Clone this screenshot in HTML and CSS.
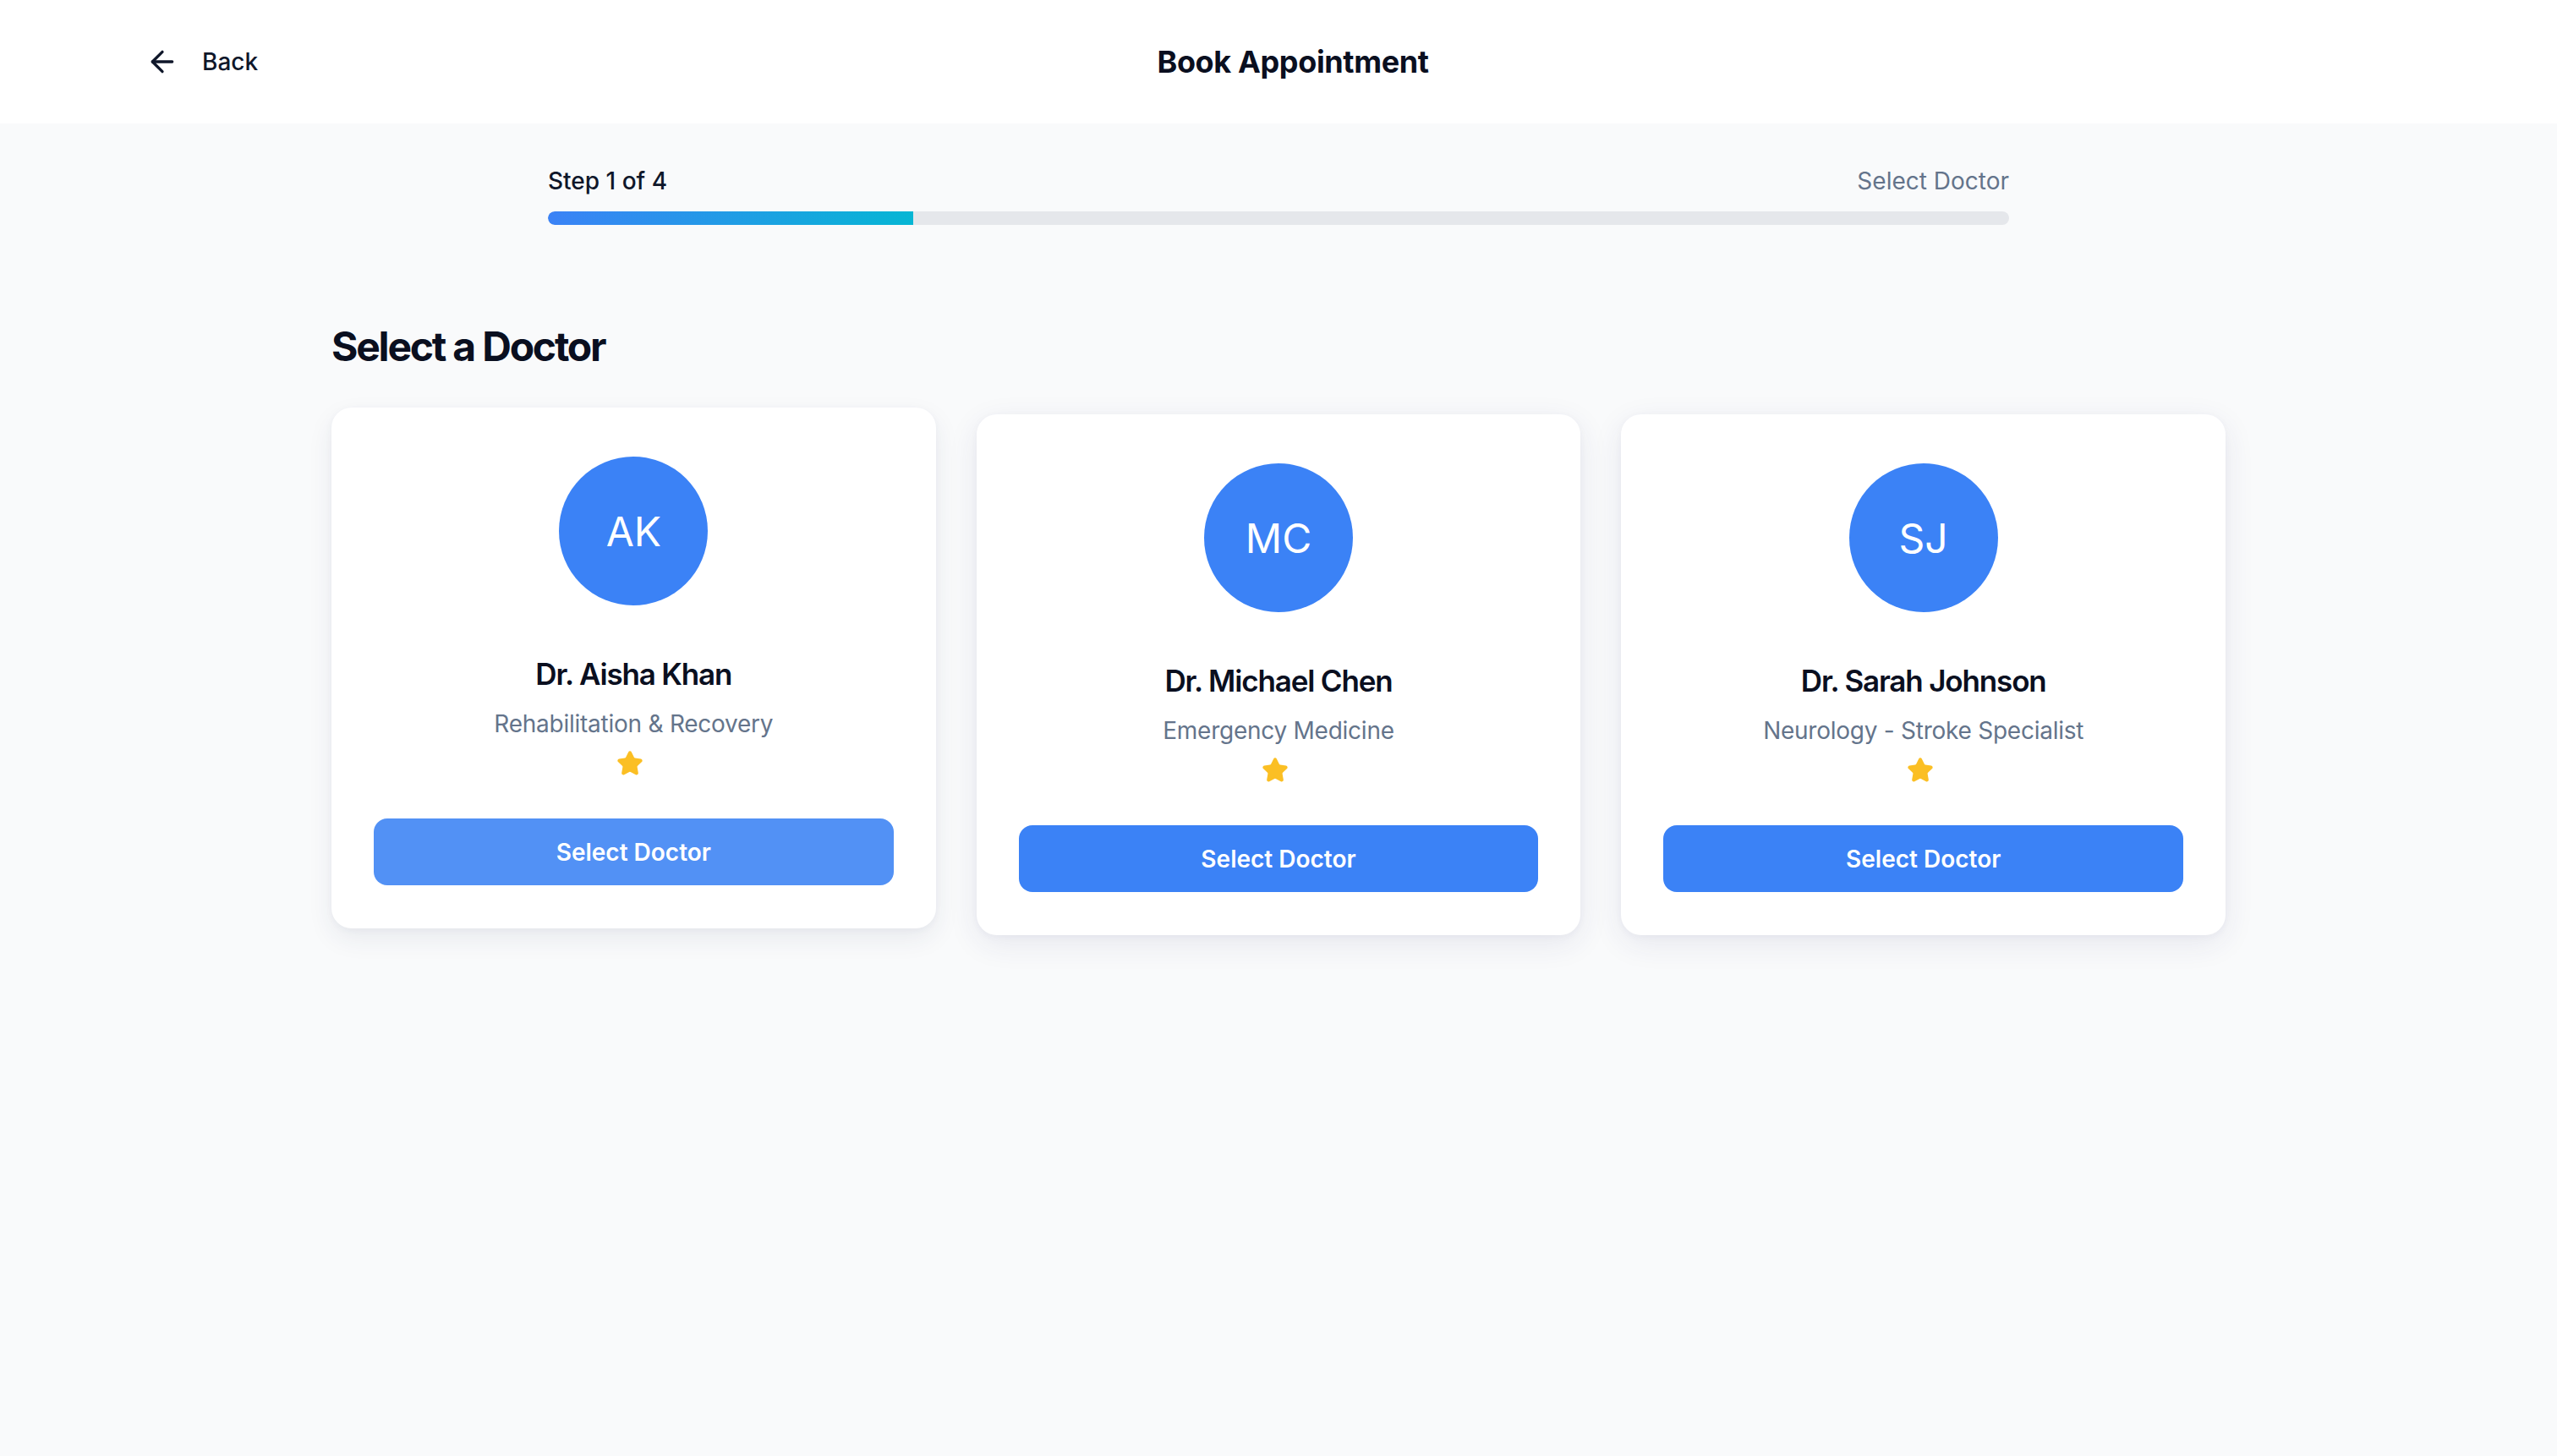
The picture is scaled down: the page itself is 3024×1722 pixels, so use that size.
FILE: index.html
```html
<!DOCTYPE html>
<html lang="en">
<head>
<meta charset="utf-8">
<title>Book Appointment</title>
<link rel="stylesheet" href="styles.css">
</head>
<body>
<header class="topbar">
  <a class="back" href="#">
    <svg class="back-icon" viewBox="0 0 24 24" fill="none" stroke="currentColor" stroke-width="2" stroke-linecap="round" stroke-linejoin="round"><path d="m12 19-7-7 7-7"/><path d="M19 12H5"/></svg>
    <span>Back</span>
  </a>
  <h1 class="title">Book Appointment</h1>
  <div class="spacer"></div>
</header>

<main>
  <section class="progress">
    <div class="progress-labels">
      <span class="step">Step 1 of 4</span>
      <span class="step-name">Select Doctor</span>
    </div>
    <div class="bar"><div class="bar-fill" style="width:25%"></div></div>
  </section>

  <section class="doctors">
    <h2 class="heading">Select a Doctor</h2>
    <div class="grid">
      <div class="card card-hover">
        <div class="avatar">AK</div>
        <div class="name">Dr. Aisha Khan</div>
        <div class="spec">Rehabilitation &amp; Recovery</div>
        <div class="rating"><svg class="star" viewBox="0 0 24 24"><path d="M11.525 2.295a.53.53 0 0 1 .95 0l2.31 4.679a2.123 2.123 0 0 0 1.595 1.16l5.166.756a.53.53 0 0 1 .294.904l-3.736 3.638a2.123 2.123 0 0 0-.611 1.878l.882 5.14a.53.53 0 0 1-.771.56l-4.618-2.428a2.122 2.122 0 0 0-1.973 0L6.396 21.01a.53.53 0 0 1-.77-.56l.881-5.139a2.122 2.122 0 0 0-.611-1.879L2.16 9.795a.53.53 0 0 1 .294-.906l5.165-.755a2.122 2.122 0 0 0 1.597-1.16z"/></svg></div>
        <button class="select">Select Doctor</button>
      </div>
      <div class="card">
        <div class="avatar">MC</div>
        <div class="name">Dr. Michael Chen</div>
        <div class="spec">Emergency Medicine</div>
        <div class="rating"><svg class="star" viewBox="0 0 24 24"><path d="M11.525 2.295a.53.53 0 0 1 .95 0l2.31 4.679a2.123 2.123 0 0 0 1.595 1.16l5.166.756a.53.53 0 0 1 .294.904l-3.736 3.638a2.123 2.123 0 0 0-.611 1.878l.882 5.14a.53.53 0 0 1-.771.56l-4.618-2.428a2.122 2.122 0 0 0-1.973 0L6.396 21.01a.53.53 0 0 1-.77-.56l.881-5.139a2.122 2.122 0 0 0-.611-1.879L2.16 9.795a.53.53 0 0 1 .294-.906l5.165-.755a2.122 2.122 0 0 0 1.597-1.16z"/></svg></div>
        <button class="select">Select Doctor</button>
      </div>
      <div class="card">
        <div class="avatar">SJ</div>
        <div class="name">Dr. Sarah Johnson</div>
        <div class="spec">Neurology - Stroke Specialist</div>
        <div class="rating"><svg class="star" viewBox="0 0 24 24"><path d="M11.525 2.295a.53.53 0 0 1 .95 0l2.31 4.679a2.123 2.123 0 0 0 1.595 1.16l5.166.756a.53.53 0 0 1 .294.904l-3.736 3.638a2.123 2.123 0 0 0-.611 1.878l.882 5.14a.53.53 0 0 1-.771.56l-4.618-2.428a2.122 2.122 0 0 0-1.973 0L6.396 21.01a.53.53 0 0 1-.77-.56l.881-5.139a2.122 2.122 0 0 0-.611-1.879L2.16 9.795a.53.53 0 0 1 .294-.906l5.165-.755a2.122 2.122 0 0 0 1.597-1.16z"/></svg></div>
        <button class="select">Select Doctor</button>
      </div>
    </div>
  </section>
</main>
</body>
</html>
```

FILE: styles.css
```css
* { box-sizing: border-box; }

html, body {
  margin: 0;
  padding: 0;
}

body {
  background: #f9fafb;
  font-family: Inter, "Noto Sans", "Liberation Sans", sans-serif;
  color: #0f172a;
  min-height: 1722px;
}

.topbar {
  height: 146px;
  background: #ffffff;
  display: flex;
  align-items: center;
  padding: 0 175px 0 172px;
}

.back {
  display: flex;
  align-items: center;
  gap: 27px;
  color: #0f172a;
  text-decoration: none;
  font-size: 28px;
  font-weight: 500;
  line-height: 40px;
}

.back-icon {
  width: 40px;
  height: 40px;
  display: block;
}

.title {
  flex: 1;
  margin: 0;
  text-align: center;
  font-size: 36px;
  line-height: 56px;
  font-weight: 700;
  letter-spacing: -0.01em;
  color: #0a0f1f;
}

.spacer {
  width: 96px;
}

.progress {
  max-width: 1728px;
  margin: 0 auto;
  padding-top: 48px;
}

.progress-labels {
  display: flex;
  justify-content: space-between;
  align-items: center;
  font-size: 28px;
  line-height: 40px;
}

.step {
  font-weight: 500;
  color: #0f172a;
}

.step-name {
  color: #64748b;
}

.bar {
  margin-top: 16px;
  height: 16px;
  background: #e5e7eb;
  border-radius: 8px;
  overflow: hidden;
}

.bar-fill {
  height: 100%;
  background: linear-gradient(90deg, #3b82f6, #06b6d4);
  border-radius: 8px 0 0 8px;
}

.doctors {
  max-width: 2240px;
  margin: 112px auto 0;
}

.heading {
  margin: 0 0 48px;
  font-size: 48px;
  line-height: 64px;
  font-weight: 700;
  letter-spacing: -0.046em;
  color: #0a0f1f;
}

.grid {
  display: grid;
  grid-template-columns: repeat(3, 1fr);
  gap: 48px;
  align-items: start;
}

.card {
  background: #ffffff;
  border-radius: 24px;
  padding: 58px 50px 51px;
  display: flex;
  flex-direction: column;
  align-items: center;
  text-align: center;
  box-shadow: 0 10px 36px rgba(40, 48, 110, 0.09), 0 2px 8px rgba(40, 48, 110, 0.04);
}

.card-hover {
  transform: translateY(-8px);
  box-shadow: 0 12px 30px rgba(40, 48, 90, 0.08), 0 2px 8px rgba(40, 48, 90, 0.04);
}

.avatar {
  width: 176px;
  height: 176px;
  border-radius: 50%;
  background: #3b82f6;
  color: #ffffff;
  display: flex;
  align-items: center;
  justify-content: center;
  font-size: 48px;
  font-weight: 400;
}

.name {
  margin-top: 53px;
  font-size: 35px;
  line-height: 56px;
  font-weight: 600;
  letter-spacing: -0.033em;
  color: #0a0f1f;
}

.spec {
  margin-top: 11px;
  font-size: 28px;
  line-height: 40px;
  letter-spacing: -0.25px;
  color: #64748b;
}

.rating {
  margin-top: 11px;
  height: 32px;
  display: flex;
  justify-content: center;
  padding-right: 8px;
}

.star {
  width: 32px;
  height: 32px;
  display: block;
  fill: #fbbf24;
  stroke: #fbbf24;
  stroke-width: 2;
  stroke-linejoin: round;
}

.select {
  margin-top: 49px;
  width: 100%;
  height: 79px;
  border: none;
  border-radius: 16px;
  background: #3b82f6;
  color: #ffffff;
  font-family: inherit;
  font-size: 28px;
  font-weight: 600;
  cursor: pointer;
}

.card-hover .select {
  background: #5291f5;
}
```
